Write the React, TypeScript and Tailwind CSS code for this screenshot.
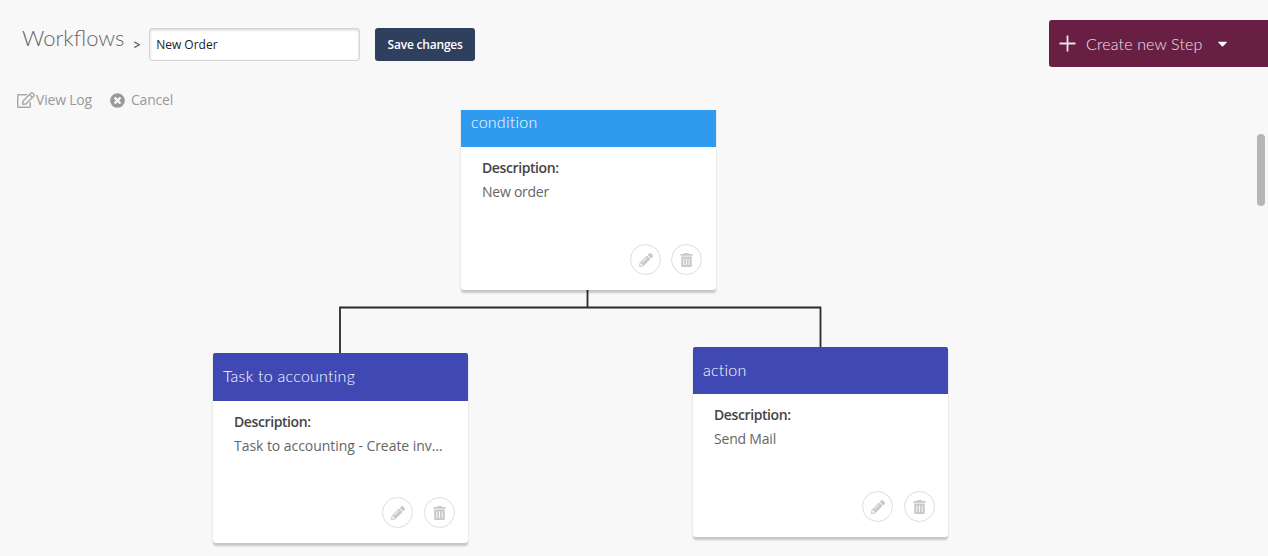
import { FaPencilAlt, FaRegEdit, FaTimesCircle, FaTrashAlt, FaCaretDown } from "react-icons/fa";

const body = "font-['Open_Sans','Noto_Sans',sans-serif]";

function Node({ title, desc, color, headerH, pos, titlePad, descTrack, actionPad }: { title: string; desc: string; color: string; headerH: string; pos: string; titlePad: string; descTrack: string; actionPad: string }) {
  return (
    <div className={`absolute flex h-[190px] w-[255px] flex-col rounded-[3px] bg-white shadow-[0_3px_2px_rgba(0,0,0,0.2)] ${pos}`}>
      <div className={`${color} ${headerH} ${titlePad} flex shrink-0 items-center rounded-t-[2px] pl-[10px] font-['Lato',sans-serif] text-[16px] font-light tracking-[0.25px] text-white`}>
        {title}
      </div>
      <div className="flex min-h-0 flex-1 flex-col pt-[11px] pb-[15px] pl-[21px]">
        <div className="text-[14px] leading-[20px] font-semibold tracking-[-0.4px] text-[#444]">Description:</div>
        <div className={`mt-[4px] text-[14px] leading-[20px] whitespace-nowrap text-[#666] ${descTrack}`}>{desc}</div>
        <div className={`mt-auto flex justify-end ${actionPad}`}>
          <button className="flex h-[31px] w-[31px] items-center justify-center rounded-full border border-[#ddd] text-[#c9c9c9]">
            <FaPencilAlt className="h-[14px] w-[14px]" />
          </button>
          <button className="flex h-[31px] w-[31px] items-center justify-center rounded-full border border-[#ddd] text-[#c9c9c9]">
            <FaTrashAlt className="h-[14px] w-[13px]" />
          </button>
        </div>
      </div>
    </div>
  );
}

export default function App() {
  return (
    <div className={`relative h-[556px] w-[1268px] overflow-hidden bg-[#f8f8f8] ${body}`}>
      <header className="flex h-[110px] items-start justify-between">
        <div className="flex flex-col pl-[17px]">
          <div className="flex h-[61px] items-center pt-[28px] pl-[5px]">
            <span className="pb-[14px] font-['Lato',sans-serif] text-[22px] leading-[33px] font-light text-[#666]">Workflows</span>
            <span className="ml-[8px] font-['Lato',sans-serif] text-[15px] leading-[33px] text-[#555]">&gt;</span>
            <input
              readOnly
              value="New Order"
              className="ml-[8px] h-[33px] w-[211px] rounded-[3px] border border-[#d4d4d4] bg-white px-[6px] text-[12px] text-[#222] shadow-[inset_0_1px_3px_rgba(0,0,0,0.18)] outline-none"
            />
            <button className="ml-[15px] h-[33px] w-[100px] rounded-[3px] bg-[#2f3f5e] text-[12px] font-semibold tracking-[-0.2px] text-white">Save changes</button>
          </div>
          <div className="mt-[29px] flex items-center text-[14px] leading-[20px] tracking-[-0.2px] text-[#999]">
            <FaRegEdit className="h-[16px] w-[18px] text-[#aaa]" />
            <span className="ml-px">View Log</span>
            <FaTimesCircle className="ml-[18px] h-[15px] w-[15px] text-[#999]" />
            <span className="ml-[6px]">Cancel</span>
          </div>
        </div>
        <button className="mt-[20px] flex h-[47px] w-[219px] items-center rounded-l-[3px] bg-[#691f43] pl-[10px] font-['Lato',sans-serif] text-[16px] font-light tracking-[0.15px] text-[#f0e2e9]">
          <svg width="17" height="17" viewBox="0 0 17 17" className="shrink-0"><path d="M8.5 0.5v16M0.5 8.5h16" stroke="#f0e4ea" strokeWidth="1.8" /></svg>
          <span className="ml-[10px]">Create new Step</span>
          <FaCaretDown className="ml-[12px] h-[15px] w-[15px] text-white" />
        </button>
      </header>

      <main className="relative h-[446px] overflow-hidden">
        <svg className="absolute top-0 left-0" width="1268" height="446" fill="none">
          <path d="M587.5 180v17.5M340 243V197.5H820.5V237" stroke="#2b2b2b" strokeWidth="1.8" />
        </svg>
        <Node title="condition" desc="New order" color="bg-[#2e9bef]" headerH="h-[47px]" titlePad="pb-[3px]" descTrack="tracking-[-0.25px]" actionPad="gap-[10px] pr-[14px]" pos="left-[461px] top-[-10px]" />
        <Node title="Task to accounting" desc="Task to accounting - Create inv…" color="bg-[#4049b3]" headerH="h-[48px]" titlePad="pb-[2px]" descTrack="tracking-[-0.05px]" actionPad="gap-[11px] pr-[13px]" pos="left-[213px] top-[243px]" />
        <Node title="action" desc="Send Mail" color="bg-[#4049b3]" headerH="h-[47px]" titlePad="pb-[2px]" descTrack="tracking-[-0.2px]" actionPad="gap-[11px] pr-[13px]" pos="left-[693px] top-[237px]" />
      </main>

      <div className="absolute top-[134px] left-[1257px] h-[72px] w-[8px] rounded bg-[#b6b6b6]" />
    </div>
  );
}
